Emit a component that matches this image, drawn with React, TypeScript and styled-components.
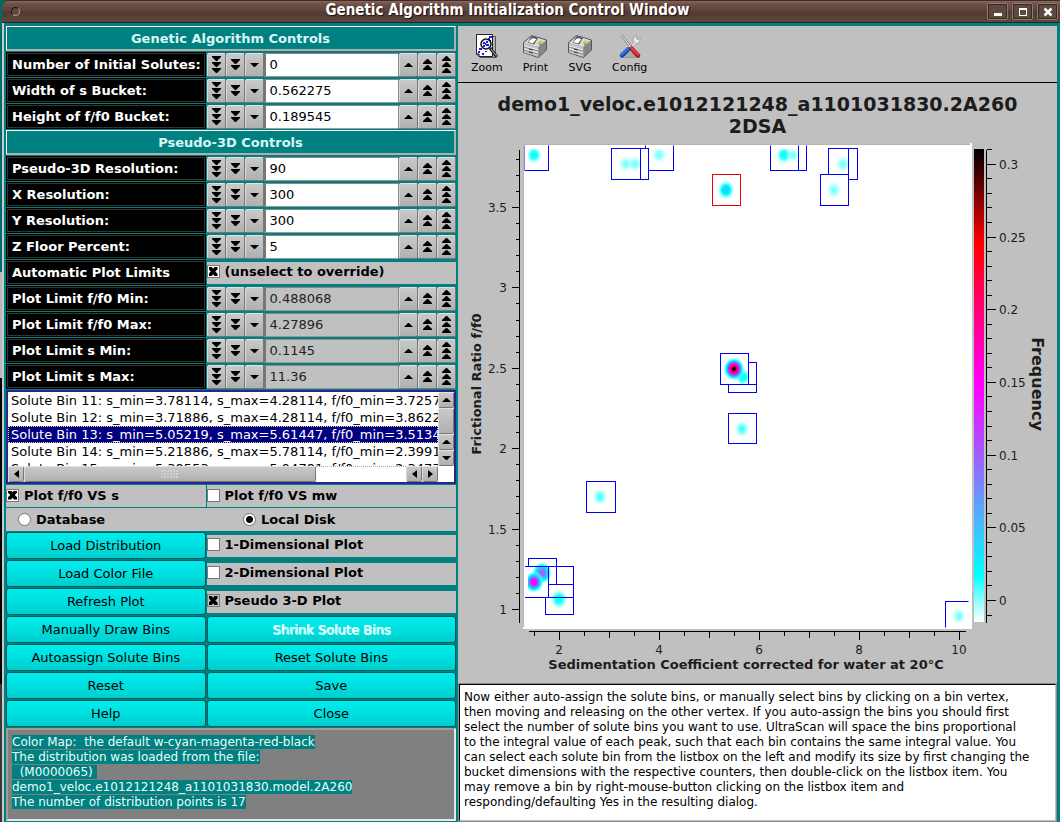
import React, { useId } from "react";
import styled, { createGlobalStyle, css } from "styled-components";

const Global = createGlobalStyle`
  * { box-sizing: border-box; }
  body { margin: 0; background: #008080; }
  body, button, input { font-family: "DejaVu Sans", sans-serif; font-size: 13px; color: #000; }
  button { margin: 0; padding: 0; cursor: pointer; }
`;

/* ---------- window frame ---------- */

const Desktop = styled.div`
  min-height: 100vh;
  display: flex;
  padding-left: 2px;
  background: linear-gradient(#006a6a 272px, #b8b8b8 272px 378px, #000 378px 684px, #383838 684px);
`;

const Frame = styled.div`
  flex: 1;
  min-width: 0;
  display: flex;
  flex-direction: column;
`;

const TitleBar = styled.header`
  display: grid;
  grid-template-columns: 18px 1fr 72px;
  align-items: center;
  height: 23px;
  padding: 0 2px 0 9px;
  border-radius: 6px 0 0 0;
  border-top: 1px solid #3a2c27;
  border-bottom: 1px solid #2e231f;
  background: linear-gradient(#8b665c, #6e5047 3px, #5c433b 10px, #503a33 11px, #5d463e);
`;

const MenuDot = styled.button`
  width: 9px;
  height: 9px;
  border: 1px solid #b09a92;
  border-top-color: #1d1512;
  border-left-color: #1d1512;
  border-radius: 50%;
  background: #5f4940;
`;

const WindowTitle = styled.h1`
  margin: 0;
  padding-bottom: 2px;
  text-align: center;
  font: bold 15px/19px "DejaVu Sans Condensed", "DejaVu Sans", sans-serif;
  color: #fff;
  text-shadow: 1px 1px 1px #1a1210;
  white-space: nowrap;
`;

const WindowButtons = styled.div`
  display: flex;
  justify-content: flex-end;
  gap: 4px;
`;

const WindowButton = styled.button`
  display: grid;
  place-items: center;
  width: 21px;
  height: 17px;
  border: 1px solid #8d7a73;
  border-radius: 2px;
  outline: 1px solid #37291f;
  outline-offset: -2px;
  background: #5e4940;
`;

const Body = styled.div`
  flex: 1;
  display: grid;
  grid-template-columns: 450px minmax(0, 1fr);
  gap: 2px;
  padding: 3px 3px 0 2px;
  border-left: 2px solid #c9c9c9;
  background: #008080;
`;

/* ---------- left column ---------- */

const Side = styled.div`
  display: flex;
  flex-direction: column;
`;

const Rows = styled.div`
  display: grid;
  gap: 1px;
  margin-bottom: 1px;
`;

const Banner = styled.h2`
  height: 25px;
  margin: 0;
  border: 2px solid;
  border-color: #fff #b5aea9 #b5aea9 #fff;
  border-top-width: 1px;
  border-left-width: 1px;
  background: #008080;
  color: #d8f8f4;
  text-align: center;
  font-size: 13px;
  line-height: 23px;
`;

const Row = styled.div`
  display: grid;
  grid-template-columns: 4fr 5fr;
  column-gap: 1px;
  align-items: center;
`;

const FieldLabel = styled.label`
  height: 25px;
  padding-left: 5px;
  border: 1px solid #000;
  outline: 1px solid #38322e;
  outline-offset: -2px;
  background: #000;
  color: #fff;
  font-weight: bold;
  line-height: 23px;
  white-space: nowrap;
`;

const Counter = styled.div`
  display: grid;
  grid-template-columns: repeat(3, 19px) 1fr repeat(3, 19px);
  height: 24px;
`;

const bevel = css`
  border: 1px solid;
  border-color: #e2e2e2 #777 #777 #dadada;
  border-radius: 2px;
  background: linear-gradient(#c9c9c9, #b0b0b0);
`;

const StepButton = styled.button`
  display: grid;
  place-items: center;
  ${bevel}
`;

const CounterInput = styled.input`
  min-width: 0;
  width: 100%;
  padding: 0 0 1px 4px;
  border: 2px solid;
  border-width: 1px 1px 1px 2px;
  border-color: #888 #888 #999 #777;
  border-radius: 0;
  outline: 0;
  background: #fff;
  &:disabled { background: #c0c0c0; color: #222; }
`;

const Option = styled.label<{ $h?: number; $pad?: number }>`
  display: flex;
  align-items: center;
  gap: 5px;
  height: ${(p) => p.$h ?? 22}px;
  padding-left: ${(p) => p.$pad ?? 0}px;
  padding-bottom: ${(p) => (p.$h ? 0 : 2)}px;
  background: #c0c0c0;
  font-weight: bold;
  white-space: nowrap;
`;

const CheckInput = styled.input.attrs({ type: "checkbox" })<{ $flat?: boolean }>`
  appearance: none;
  position: relative;
  width: 13px;
  height: 13px;
  margin: 0;
  border: 1px solid #777;
  background: ${(p) => (p.$flat ? "#c0c0c0" : "#fff")};
  &:checked::after {
    content: "";
    position: absolute;
    inset: 1px;
    background: #000;
    clip-path: polygon(0 0, 35% 0, 50% 20%, 65% 0, 100% 0, 100% 25%, 75% 50%, 100% 75%, 100% 100%, 65% 100%, 50% 80%, 35% 100%, 0 100%, 0 75%, 25% 50%, 0 25%);
  }
`;

const RadioInput = styled.input.attrs({ type: "radio" })`
  appearance: none;
  width: 13px;
  height: 13px;
  margin: 0;
  border: 1px solid #777;
  border-radius: 50%;
  background: #fff;
  &:checked { background: radial-gradient(circle, #000 3px, #fff 4px); }
`;

const Split = styled.div<{ $even?: boolean }>`
  display: grid;
  grid-template-columns: ${(p) => (p.$even ? "1fr 1fr" : "4fr 5fr")};
  column-gap: ${(p) => (p.$even ? 0 : 1)}px;
  margin-bottom: 1px;
`;

const PushButton = styled.button`
  height: 27px;
  border: 1px solid #005f5f;
  border-radius: 3px;
  background: linear-gradient(#00ecec, #00e0e0 50%, #00cccc);
  padding-bottom: 1px;
  &:disabled { color: #e4ffff; text-shadow: 1px 1px 0 #b8ffff, 1px 0 0 #e4ffff; }
`;

/* ---------- list box ---------- */

const ListFrame = styled.div`
  display: grid;
  grid-template-columns: minmax(0, 1fr) 16px;
  grid-template-rows: 74px 16px;
  height: 94px;
  margin-bottom: 1px;
  border: 2px solid #26268e;
  background: #fff;
`;

const List = styled.ul`
  margin: 0;
  padding: 0;
  overflow: hidden;
  list-style: none;
`;

const ListItem = styled.li<{ $selected?: boolean }>`
  height: 17px;
  padding-left: 2px;
  border: 1px dotted ${(p) => (p.$selected ? "#e8e080" : "transparent")};
  background: ${(p) => (p.$selected ? "#000080" : "transparent")};
  color: ${(p) => (p.$selected ? "#fff" : "#000")};
  line-height: 16px;
  white-space: nowrap;
`;

const VBar = styled.div`
  display: grid;
  grid-template-rows: 16px 1fr 16px 16px;
`;

const HBar = styled.div`
  display: grid;
  grid-template-columns: 16px 292px 1fr 16px 16px;
`;

const BarPiece = styled.button`
  display: grid;
  place-items: center;
  ${bevel}
`;

const Thumb = styled.div`
  display: grid;
  place-items: center;
  ${bevel}
`;

const Grip = styled.span`
  width: 18px;
  height: 9px;
  background: radial-gradient(circle at 1px 1px, #d2d2d2 1px, transparent 1px) 0 0 / 3px 3px;
`;

const Trough = styled.div`
  border-top: 1px dotted #aaa;
`;

const Status = styled.div`
  flex: 1;
  min-height: 93px;
  margin-bottom: 1px;
  padding: 5px 4px;
  border: 2px solid;
  border-color: #a39d99 #e8e8e8 #e8e8e8 #a39d99;
  background: #808080;
  color: #e6fffb;
  line-height: 15px;
  font-size: 12px;
  white-space: pre-wrap;
  span { background: #008080; }
`;

/* ---------- right column ---------- */

const Main = styled.main`
  display: flex;
  flex-direction: column;
  min-width: 0;
  background: #c0c0c0;
`;

const Toolbar = styled.nav`
  display: flex;
  gap: 20px;
  height: 57px;
  padding: 8px 12px 0 13px;
  border-bottom: 1px solid #000;
`;

const ToolButton = styled.button`
  display: flex;
  flex-direction: column;
  align-items: center;
  gap: 1px;
  height: 42px;
  border: 0;
  background: none;
  font-size: 11px;
  line-height: 15px;
`;

const PlotTitle = styled.h2`
  margin: 0;
  padding: 10px 0 6px;
  color: #1c1c1c;
  text-align: center;
  font-size: 19px;
  line-height: 22px;
`;

const Chart = styled.svg`
  display: block;
  width: 100%;
  height: auto;
  font-family: "DejaVu Sans", sans-serif;
  font-size: 12px;
  fill: #1c1c1c;
  .title { font-size: 13px; font-weight: bold; }
  .scale-title { font-size: 16px; font-weight: bold; }
  .line { stroke: #000; fill: none; shape-rendering: crispEdges; }
  .bin { stroke: #0000f4; fill: none; shape-rendering: crispEdges; }
  .selected { stroke: #f00000; }
`;

const Help = styled.p`
  flex: 1;
  margin: 1px 1px 1px;
  padding: 5px 4px;
  border: 1px solid;
  border-color: #000 #c0c0c0 #c0c0c0 #000;
  outline: 1px solid #8c8c8c;
  background: #fff;
  font-size: 12px;
  line-height: 15px;
  white-space: pre-line;
`;

/* ---------- drawings ---------- */

type Dir = "up" | "down";

function Arrows({ dir, n }: { dir: Dir; n: number }) {
  const h = n === 1 ? 4 : n * 6 - 1;
  const tri = Array.from({ length: n }, (_, i) => {
    const y = i * 6;
    if (n === 1) return dir === "up" ? "M0 4L4 0H5L9 4Z" : "M0 0H9L5 4H4Z";
    return dir === "up" ? `M0 ${y + 5}V${y + 4}L4 ${y}H5L9 ${y + 4}V${y + 5}Z` : `M0 ${y}H9V${y + 1}L5 ${y + 5}H4L0 ${y + 1}Z`;
  });
  return (
    <svg width="9" height={h} viewBox={`0 0 9 ${h}`} aria-hidden="true">
      <path d={tri.join("")} />
    </svg>
  );
}

function SideArrow({ left }: { left?: boolean }) {
  return (
    <svg width="5" height="8" viewBox="0 0 5 8" aria-hidden="true">
      <path d={left ? "M5 0V8L0 4Z" : "M0 0V8L5 4Z"} />
    </svg>
  );
}

function ZoomIcon() {
  return (
    <svg width="24" height="25" viewBox="0 0 24 25" aria-hidden="true">
      <path d="M5 2.500H20.500V23.500H5Z" fill="#b4b4b4" stroke="#555" />
      <path d="M1.500 .5H17.500V22.500H4L1.500 20Z" fill="#fff" stroke="#222" />
      <path d="M1.500 20H4V22.500" fill="#bbb" stroke="#000" />
      <path d="M14 2h3v2h-3zM13 4h2v2h-2zM4 14h3v2H4zM3 17h2v2H3zM7 19h2v2H7zM10 17h2v1h-2zM15 6h1v1h-1z" fill="#1a1aff" />
      <path d="M15 14L22 23" stroke="#222" strokeWidth="3" />
      <path d="M16 15L22 22.500" stroke="#bbb" />
      <circle cx="11" cy="10" r="5" fill="#e6ecff" stroke="#111" strokeWidth="1.500" />
      <path d="M8 8h2v2H8zM11 7h2v2h-2zM11 10h3v2h-3zM8 11h2v2H8zM10 9h1v2h-1z" fill="#1a1aff" />
    </svg>
  );
}

function PrinterIcon() {
  return (
    <svg width="24" height="25" viewBox="0 0 24 25" aria-hidden="true">
      <path d="M.5 8.500L8.500 1.500L23.500 6V16L15.500 23.500L.5 18.500Z" fill="#8a8a8a" stroke="#555" />
      <path d="M1 9L9 2L23 6.500L15.500 13Z" fill="#dcdcdc" />
      <path d="M1 9L15.500 13V23L1 18.500Z" fill="#c6c6c6" />
      <path d="M15.500 13L23 6.500V16L15.500 23Z" fill="#858585" />
      <path d="M9 2L15 4L11 10.500L4.500 8.500Z" fill="#4a4a4a" />
      <path d="M9.500 4L13.500 5L10 9.500L5 8Z" fill="#fff" />
      <path d="M17 6.500L21 7.500L18 10.500L14 9.500Z" fill="#b9c06a" />
      <path d="M18 7h2v1h-2z" fill="#f2e83a" />
      <path d="M16 10h2v1h-2z" fill="#3a3" />
      <path d="M1 12L15 16M1 15L15 19" stroke="#f4f4f4" />
      <path d="M1 13L15 17M1 16L15 20" stroke="#888" />
      <path d="M6 15l4 1M6 18l4 1" stroke="#333" />
    </svg>
  );
}

function ConfigIcon() {
  return (
    <svg width="24" height="25" viewBox="0 0 24 25" aria-hidden="true">
      <path d="M4 23.500H19L12 18Z" fill="#aaa" stroke="#999" />
      <path d="M3 1L12 12" stroke="#888" strokeWidth="2.500" />
      <path d="M3 1L12 12" stroke="#f4f4f4" strokeWidth="1" />
      <path d="M12 13L16.500 8C14 5 16 1.500 19 1.500L18 4L20 6L22 3.500C22.500 7 21 9.500 18.500 9L13 15Z" fill="#ececec" stroke="#999" strokeWidth=".8" />
      <path d="M13 14L20 21.500" stroke="#9c1a1a" strokeWidth="4.500" strokeLinecap="round" />
      <path d="M13 13.500L20 20.500" stroke="#e43a3a" strokeWidth="2.500" strokeLinecap="round" />
      <path d="M10.500 15L4 21.500" stroke="#1a4496" strokeWidth="4.500" strokeLinecap="round" />
      <path d="M10 14.500L3.500 20.500" stroke="#2f74e4" strokeWidth="2.500" strokeLinecap="round" />
      <path d="M10 13L13 12" stroke="#ddd" />
    </svg>
  );
}

/* ---------- plot ---------- */

const sx = (s: number) => 1 + 50 * s;
const fy = (f: number) => Math.round(466 - 160.8 * (f - 1));
const cy = (v: number) => Math.round(457 - 1454 * v);

const range = (from: number, to: number, step: number) => {
  const out: number[] = [];
  for (let i = 0; from + i * step <= to + step / 10; i++) out.push(Math.round((from + i * step) * 100) / 100);
  return out;
};

type Spot = { x: number; y: number; kind: "pale" | "light" | "cyan" | "sky" | "violet" | "magenta" | "peak"; r?: number };

const spots: Spot[] = [
  { x: 76, y: 12, kind: "cyan" },
  { x: 168, y: 21, kind: "pale" },
  { x: 177, y: 21, kind: "pale" },
  { x: 201, y: 12, kind: "pale" },
  { x: 268, y: 47, kind: "sky", r: 9 },
  { x: 326, y: 12, kind: "cyan" },
  { x: 335, y: 12, kind: "pale", r: 7 },
  { x: 385, y: 21, kind: "pale" },
  { x: 376, y: 47, kind: "pale" },
  { x: 285, y: 234, kind: "cyan", r: 8 },
  { x: 276, y: 226, kind: "peak", r: 11 },
  { x: 284, y: 286, kind: "light" },
  { x: 142, y: 354, kind: "light" },
  { x: 84, y: 430, kind: "violet", r: 10 },
  { x: 76, y: 439, kind: "magenta", r: 10 },
  { x: 101, y: 456, kind: "cyan", r: 9 },
  { x: 501, y: 473, kind: "pale" },
];

const rampStops: Record<Spot["kind"], [number, string, number][]> = {
  pale: [[0, "#6ff", 1], [40, "#8ff", 0.8], [100, "#cff", 0]],
  light: [[0, "#3ff", 1], [40, "#5ff", 0.8], [100, "#cff", 0]],
  cyan: [[0, "#0ff", 1], [45, "#1ff", 0.9], [100, "#aff", 0]],
  sky: [[0, "#1ad8ff", 1], [30, "#1ad8ff", 1], [50, "#0ff", 1], [65, "#4ff", 0.7], [100, "#cff", 0]],
  violet: [[0, "#a060ff", 1], [25, "#9070ff", 1], [55, "#20d8ff", 1], [70, "#0ff", 1], [100, "#aff", 0]],
  magenta: [[0, "#f0f", 1], [25, "#f0f", 1], [50, "#40a0ff", 1], [70, "#0ff", 1], [100, "#aff", 0]],
  peak: [[0, "#000", 1], [12, "#400", 1], [28, "#f00070", 1], [45, "#f0f", 1], [58, "#4a90ff", 1], [72, "#0ff", 1], [100, "#aff", 0]],
};

const bins = [
  "M66 0V27H90V0",
  "M153 5H190V36H153ZM182 5V36",
  "M187 0V5M215 0V27H190",
  "M312 0V27H348V0M340 0V27",
  "M370 31V5H399V36H390M390 5V31",
  "M362 31H390V62H362Z",
  "M262 210H290V241H262ZM290 219H298V249H270V241M290 241H298",
  "M270 270H298V300H270Z",
  "M128 338H157V369H128Z",
  "M66 423H90V454H66M70 423V415H98V441M90 423H115V471H87V454M90 441H115M90 454H115",
  "M512 458H487V484",
];

function Plot() {
  const id = useId();
  return (
    <Chart viewBox="0 0 599 540" role="img" aria-label="Pseudo 3-D plot of frictional ratio against sedimentation coefficient">
      <defs>
        <clipPath id={`${id}clip`}><rect x="66" y="2" width="444" height="482" /></clipPath>
        <clipPath id={`${id}data`}><rect x="70" y="6" width="436" height="473" /></clipPath>
        <linearGradient id={`${id}bar`} x1="0" y1="1" x2="0" y2="0">
          <stop offset="0" stopColor="#fff" />
          <stop offset="0.1" stopColor="#0ff" />
          <stop offset="0.5" stopColor="#f0f" />
          <stop offset="0.8" stopColor="#f00" />
          <stop offset="1" stopColor="#000" />
        </linearGradient>
        {Object.entries(rampStops).map(([kind, stops]) => (
          <radialGradient key={kind} id={id + kind}>
            {stops.map(([o, c, a]) => <stop key={o} offset={`${o}%`} stopColor={c} stopOpacity={a} />)}
          </radialGradient>
        ))}
      </defs>

      <rect x="65" y="1" width="448" height="485" fill="#b9b3ae" />
      <path d="M66 2H512V0H514V486H65V484H66Z" fill="#fff" />
      <g clipPath={`url(#${id}data)`}>
        {spots.map((s, i) => (
          <ellipse key={i} cx={s.x} cy={s.y} rx={s.r ?? 8} ry={(s.r ?? 8) + 1} fill={`url(#${id}${s.kind})`} />
        ))}
      </g>
      <g clipPath={`url(#${id}clip)`} transform="translate(0.5 0.5)">
        {bins.map((d) => <path key={d} className="bin" d={d} />)}
        <path className="bin selected" d="M254 31H282V62H254Z" />
      </g>

      <g transform="translate(0.5 0.5)">
        <path
          className="line"
          d={"M61 6V479" + range(1, 3.8, 0.1).map((f) => `M61 ${fy(f)}H${(f * 10) % 5 === 0 ? 53 : 57}`).join("")}
        />
        <path
          className="line"
          d={"M70 488H507" + range(1.5, 10, 0.5).map((s) => `M${sx(s)} 488V${s % 2 === 0 ? 496 : s % 1 === 0 ? 494 : 492}`).join("")}
        />
        <path
          className="line"
          d={"M528 6V479" + range(-0.01, 0.31, 0.01).map((v) => `M528 ${cy(v)}H${Math.round(v * 100) % 5 === 0 ? 537 : 533}`).join("")}
        />
      </g>
      <rect x="516" y="6" width="10" height="473" fill={`url(#${id}bar)`} />

      {range(1, 3.5, 0.5).map((f) => <text key={f} x="49" y={fy(f) + 5} textAnchor="end">{f}</text>)}
      {range(2, 10, 2).map((s) => <text key={s} x={sx(s)} y="511" textAnchor="middle">{s}</text>)}
      {range(0, 0.3, 0.05).map((v) => <text key={v} x="541" y={cy(v) + 5}>{v}</text>)}

      <text className="title" x="288" y="526" textAnchor="middle">Sedimentation Coefficient corrected for water at 20°C</text>
      <text className="title" transform="translate(23 241) rotate(-90)" textAnchor="middle">Frictional Ratio f/f0</text>
      <text className="scale-title" transform="translate(574 241) rotate(90)" textAnchor="middle">Frequency</text>
    </Chart>
  );
}

/* ---------- composed controls ---------- */

function CounterRow({ label, value, disabled }: { label: string; value: string; disabled?: boolean }) {
  const id = useId();
  return (
    <Row>
      <FieldLabel htmlFor={id}>{label}</FieldLabel>
      <Counter>
        {[3, 2, 1].map((n) => (
          <StepButton key={n} aria-label={`Decrease ${label} step ${n}`}><Arrows dir="down" n={n} /></StepButton>
        ))}
        <CounterInput id={id} defaultValue={value} disabled={disabled} />
        {[1, 2, 3].map((n) => (
          <StepButton key={n} aria-label={`Increase ${label} step ${n}`}><Arrows dir="up" n={n} /></StepButton>
        ))}
      </Counter>
    </Row>
  );
}

const solutes = [
  "Solute Bin 11: s_min=3.78114, s_max=4.28114, f/f0_min=3.72571",
  "Solute Bin 12: s_min=3.71886, s_max=4.28114, f/f0_min=3.8622,",
  "Solute Bin 13: s_min=5.05219, s_max=5.61447, f/f0_min=3.51347",
  "Solute Bin 14: s_min=5.21886, s_max=5.78114, f/f0_min=2.39917",
  "Solute Bin 15: s_min=5.38553, s_max=5.94781, f/f0_min=2.34773",
];

const helpText = `Now either auto-assign the solute bins, or manually select bins by clicking on a bin vertex,
then moving and releasing on the other vertex. If you auto-assign the bins you should first
select the number of solute bins you want to use. UltraScan will space the bins proportional
to the integral value of each peak, such that each bin contains the same integral value. You
can select each solute bin from the listbox on the left and modify its size by first changing the
bucket dimensions with the respective counters, then double-click on the listbox item. You
may remove a bin by right-mouse-button clicking on the listbox item and
responding/defaulting Yes in the resulting dialog.`;

const statusText = `Color Map:  the default w-cyan-magenta-red-black
The distribution was loaded from the file:
  (M0000065) 
demo1_veloc.e1012121248_a1101031830.model.2A260
The number of distribution points is 17`;

export default function App() {
  return (
    <Desktop>
      <Global />
      <Frame>
        <TitleBar>
          <MenuDot aria-label="Window menu" />
          <WindowTitle>Genetic Algorithm Initialization Control Window</WindowTitle>
          <WindowButtons>
            <WindowButton aria-label="Minimize">
              <svg width="10" height="10" viewBox="0 0 10 10"><path d="M1 6H9V9H1Z" fill="#fff" /></svg>
            </WindowButton>
            <WindowButton aria-label="Maximize">
              <svg width="10" height="10" viewBox="0 0 10 10"><path d="M1 1H9V9H1ZM2 3V8H8V3Z" fill="#fff" fillRule="evenodd" /></svg>
            </WindowButton>
            <WindowButton aria-label="Close window">
              <svg width="10" height="10" viewBox="0 0 10 10"><path d="M1.500 1.500L8.500 8.500M8.500 1.500L1.500 8.500" stroke="#fff" strokeWidth="2.500" /></svg>
            </WindowButton>
          </WindowButtons>
        </TitleBar>

        <Body>
          <Side>
            <Rows>
              <Banner>Genetic Algorithm Controls</Banner>
              <CounterRow label="Number of Initial Solutes:" value="0" />
              <CounterRow label="Width of s Bucket:" value="0.562275" />
              <CounterRow label="Height of f/f0 Bucket:" value="0.189545" />
              <Banner>Pseudo-3D Controls</Banner>
              <CounterRow label="Pseudo-3D Resolution:" value="90" />
              <CounterRow label="X Resolution:" value="300" />
              <CounterRow label="Y Resolution:" value="300" />
              <CounterRow label="Z Floor Percent:" value="5" />
              <Row>
                <FieldLabel htmlFor="auto-limits">Automatic Plot Limits</FieldLabel>
                <Option><CheckInput id="auto-limits" defaultChecked />(unselect to override)</Option>
              </Row>
              <CounterRow label="Plot Limit f/f0 Min:" value="0.488068" disabled />
              <CounterRow label="Plot Limit f/f0 Max:" value="4.27896" disabled />
              <CounterRow label="Plot Limit s Min:" value="0.1145" disabled />
              <CounterRow label="Plot Limit s Max:" value="11.36" disabled />
            </Rows>

            <ListFrame>
              <List role="listbox" aria-label="Solute bins">
                {solutes.map((s, i) => (
                  <ListItem key={s} role="option" aria-selected={i === 2} $selected={i === 2}>{s}</ListItem>
                ))}
              </List>
              <VBar>
                <BarPiece aria-label="Scroll up"><Arrows dir="up" n={1} /></BarPiece>
                <Thumb />
                <BarPiece aria-label="Scroll up one line"><Arrows dir="up" n={1} /></BarPiece>
                <BarPiece aria-label="Scroll down"><Arrows dir="down" n={1} /></BarPiece>
              </VBar>
              <HBar>
                <BarPiece aria-label="Scroll left"><SideArrow left /></BarPiece>
                <Thumb><Grip /></Thumb>
                <Trough />
                <BarPiece aria-label="Scroll left one column"><SideArrow left /></BarPiece>
                <BarPiece aria-label="Scroll right"><SideArrow /></BarPiece>
              </HBar>
            </ListFrame>

            <Split>
              <Option><CheckInput defaultChecked />Plot f/f0 VS s</Option>
              <Option><CheckInput />Plot f/f0 VS mw</Option>
            </Split>
            <Split $even>
              <Option $h={23} $pad={12}><RadioInput name="source" />Database</Option>
              <Option $h={23} $pad={12}><RadioInput name="source" defaultChecked />Local Disk</Option>
            </Split>

            <Rows>
              <Row><PushButton>Load Distribution</PushButton><Option><CheckInput />1-Dimensional Plot</Option></Row>
              <Row><PushButton>Load Color File</PushButton><Option><CheckInput />2-Dimensional Plot</Option></Row>
              <Row><PushButton>Refresh Plot</PushButton><Option><CheckInput $flat defaultChecked />Pseudo 3-D Plot</Option></Row>
              <Row><PushButton>Manually Draw Bins</PushButton><PushButton disabled>Shrink Solute Bins</PushButton></Row>
              <Row><PushButton>Autoassign Solute Bins</PushButton><PushButton>Reset Solute Bins</PushButton></Row>
              <Row><PushButton>Reset</PushButton><PushButton>Save</PushButton></Row>
              <Row><PushButton>Help</PushButton><PushButton>Close</PushButton></Row>
            </Rows>

            <Status role="status"><span>{statusText}</span></Status>
          </Side>

          <Main>
            <Toolbar>
              <ToolButton><ZoomIcon />Zoom</ToolButton>
              <ToolButton><PrinterIcon />Print</ToolButton>
              <ToolButton><PrinterIcon />SVG</ToolButton>
              <ToolButton><ConfigIcon />Config</ToolButton>
            </Toolbar>
            <PlotTitle>demo1_veloc.e1012121248_a1101031830.2A260<br />2DSA</PlotTitle>
            <Plot />
            <Help>{helpText}</Help>
          </Main>
        </Body>
      </Frame>
    </Desktop>
  );
}
